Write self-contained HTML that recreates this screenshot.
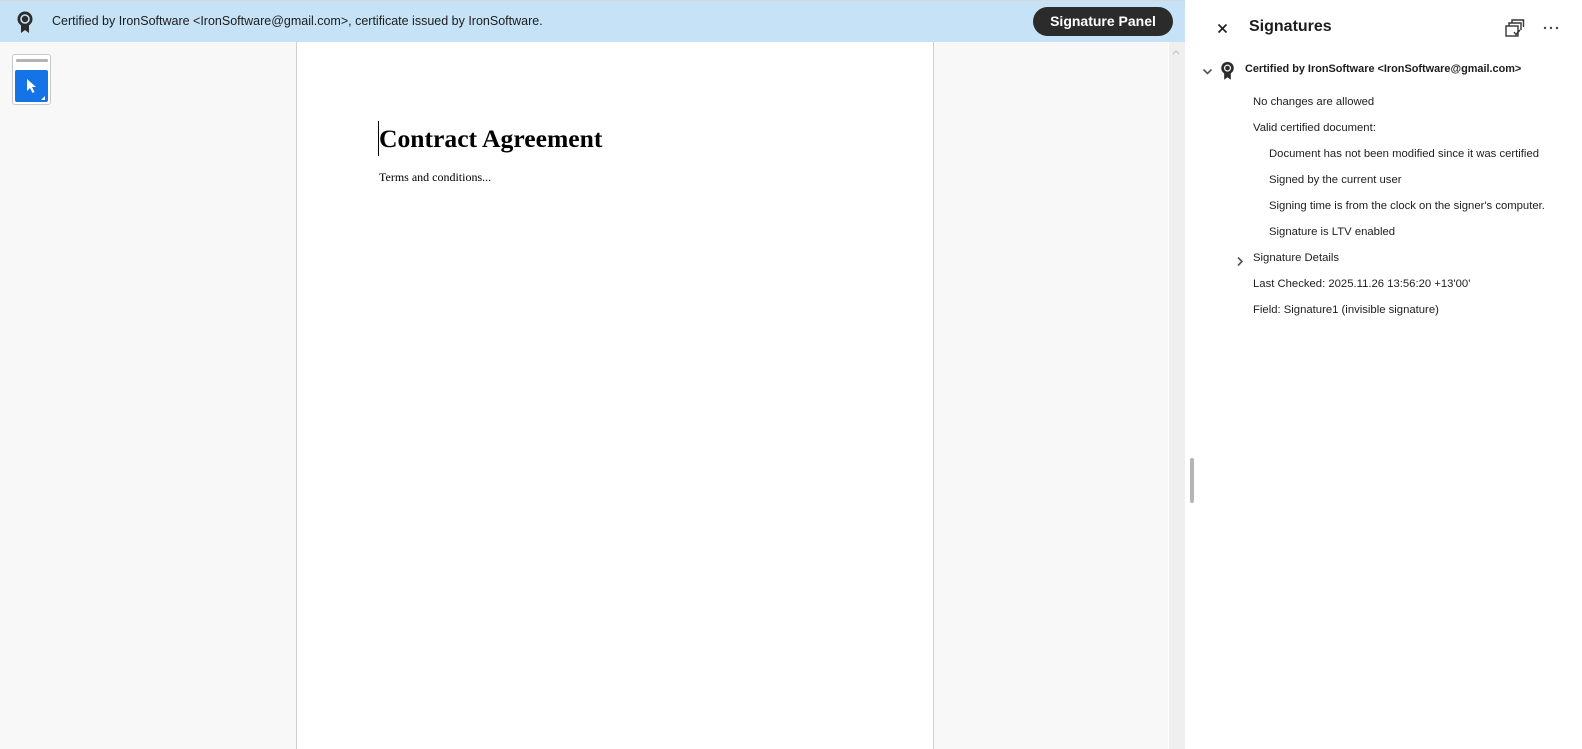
<!DOCTYPE html>
<html><head><meta charset="utf-8"><style>
*{margin:0;padding:0;box-sizing:border-box}
body{width:1582px;height:749px;overflow:hidden;background:#f8f8f8;font-family:"Liberation Sans",sans-serif;position:relative;color:#222}
.abs{position:absolute}
#bar{left:0;top:0;width:1185px;height:42px;background:#c5e2f6;border-top:1px solid #d8d8d8}
#bartxt{left:52px;top:14px;font-size:12.5px;color:#1d1d1d;white-space:nowrap}
#btn{left:1033px;top:7px;width:140px;height:29px;border-radius:15px;background:#2b2b2b;color:#fff;font-weight:bold;font-size:14px;text-align:center;line-height:29px}
#page{left:296px;top:42px;width:638px;height:707px;background:#fff;border-left:1px solid #cfcfcf;border-right:1px solid #cfcfcf}
#track{left:1168px;top:42px;width:17px;height:707px;background:#efefef;border-left:1px solid #fff}
#panel{left:1185px;top:0;width:397px;height:749px;background:#fff}
.pt{font-size:11.3px;color:#1d1d1d;white-space:nowrap}
</style></head><body>
<div class="abs" id="bar"></div>
<svg class="abs" style="left:16px;top:11px" width="18" height="23" viewBox="0 0 18 23"><path d="M5 13 L5 22 L9 19 L13 22 L13 13Z" fill="#2c2c2c"/><circle cx="9" cy="8" r="7.5" fill="#2c2c2c"/><circle cx="9" cy="8" r="4" fill="none" stroke="#c5e2f6" stroke-width="1.6"/></svg>
<div class="abs" id="bartxt">Certified by IronSoftware &lt;IronSoftware@gmail.com&gt;, certificate issued by IronSoftware.</div>
<div class="abs" id="btn">Signature Panel</div>

<div class="abs" style="left:12px;top:54px;width:39px;height:51px;border:1px solid #c8c8c8;border-radius:3px;background:#fff"></div>
<div class="abs" style="left:16px;top:59px;width:32px;height:3px;background:#b3b3b3;border-radius:1px"></div>
<div class="abs" style="left:15px;top:70px;width:33px;height:32px;background:#1473e6;border-radius:2px"></div>
<svg class="abs" style="left:15px;top:70px" width="33" height="32"><path d="M12 9 L12 21 L15 18 L17.5 23 L19.5 22 L17 17 L21 17Z" fill="#fff"/><path d="M30 26 L30 30 L26 30Z" fill="#fff"/></svg>

<div class="abs" id="page"></div>
<div class="abs" style="left:378px;top:121px;width:1px;height:35px;background:#000"></div>
<div class="abs" style="left:379px;top:124px;font-family:'Liberation Serif',serif;font-weight:bold;font-size:25.6px;color:#000;white-space:nowrap">Contract Agreement</div>
<div class="abs" style="left:379px;top:170px;font-family:'Liberation Serif',serif;font-size:12px;color:#000">Terms and conditions...</div>

<div class="abs" id="track"></div>
<svg class="abs" style="left:1171px;top:48px" width="10" height="8"><path d="M2 6 L5 3 L8 6" fill="none" stroke="#c0c0c0" stroke-width="1"/></svg>

<div class="abs" id="panel"></div>
<div class="abs" style="left:1190px;top:458px;width:4px;height:45px;background:#b5b5b5;border-radius:2px"></div>
<svg class="abs" style="left:1217px;top:23px" width="11" height="11"><path d="M1.5 1.5 L9.5 9.5 M9.5 1.5 L1.5 9.5" stroke="#222" stroke-width="1.7"/></svg>
<div class="abs" style="left:1249px;top:18px;font-size:16px;font-weight:bold;color:#1d1d1d">Signatures</div>
<svg class="abs" style="left:1505px;top:19px" width="20" height="19" viewBox="0 0 20 19"><rect x="1" y="7" width="12" height="10" fill="none" stroke="#333" stroke-width="1.4"/><path d="M4 7 V4 H16 V11 M7 4 V1 H18.5 V8" fill="none" stroke="#333" stroke-width="1.4"/><path d="M9 13 L11 15.5 L15 11" fill="none" stroke="#333" stroke-width="1.4"/></svg>
<svg class="abs" style="left:1543px;top:26px" width="16" height="4"><circle cx="2" cy="2" r="1.2" fill="#444"/><circle cx="8" cy="2" r="1.2" fill="#444"/><circle cx="14" cy="2" r="1.2" fill="#444"/></svg>

<svg class="abs" style="left:1202px;top:68px" width="11" height="8"><path d="M1.5 1.5 L5.5 5.5 L9.5 1.5" fill="none" stroke="#555" stroke-width="1.6"/></svg>
<svg class="abs" style="left:1220px;top:60px" width="15" height="22" viewBox="0 0 18 23"><path d="M5 13 L5 22 L9 19 L13 22 L13 13Z" fill="#2c2c2c"/><circle cx="9" cy="8" r="7.5" fill="#2c2c2c"/><circle cx="9" cy="8" r="4" fill="#fff" stroke="#fff" stroke-width="0.5"/><circle cx="9" cy="8" r="2.8" fill="#2c2c2c"/></svg>
<div class="abs pt" style="left:1245px;top:63px;font-weight:bold;font-size:10.9px">Certified by IronSoftware &lt;IronSoftware@gmail.com&gt;</div>

<div class="abs pt" style="left:1253px;top:96px">No changes are allowed</div>
<div class="abs pt" style="left:1253px;top:122px">Valid certified document:</div>
<div class="abs pt" style="left:1269px;top:148px">Document has not been modified since it was certified</div>
<div class="abs pt" style="left:1269px;top:174px">Signed by the current user</div>
<div class="abs pt" style="left:1269px;top:200px">Signing time is from the clock on the signer's computer.</div>
<div class="abs pt" style="left:1269px;top:226px">Signature is LTV enabled</div>
<svg class="abs" style="left:1236px;top:256px" width="8" height="11"><path d="M2 1.5 L6 5.5 L2 9.5" fill="none" stroke="#555" stroke-width="1.6"/></svg>
<div class="abs pt" style="left:1253px;top:252px">Signature Details</div>
<div class="abs pt" style="left:1253px;top:278px">Last Checked: 2025.11.26 13:56:20 +13'00'</div>
<div class="abs pt" style="left:1253px;top:304px">Field: Signature1 (invisible signature)</div>
</body></html>
